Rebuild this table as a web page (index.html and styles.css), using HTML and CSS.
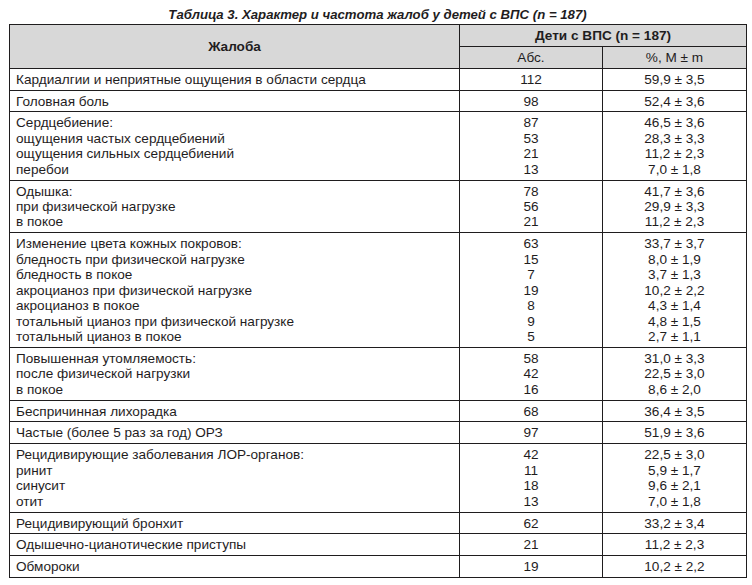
FILE: index.html
```html
<!DOCTYPE html>
<html lang="ru">
<head>
<meta charset="utf-8">
<link rel="stylesheet" href="styles.css">
</head>
<body>
<div class="page">
  <div class="caption">Таблица 3. Характер и частота жалоб у детей с ВПС (n = 187)</div>
  <table class="tbl">
    <colgroup>
      <col class="c1"><col class="c2"><col class="c3">
    </colgroup>
    <thead>
      <tr class="h1">
        <th rowspan="2" class="hmain">Жалоба</th>
        <th colspan="2">Дети с ВПС (n = 187)</th>
      </tr>
      <tr class="h2">
        <th class="sub">Абс.</th>
        <th class="sub">%, M ± m</th>
      </tr>
    </thead>
    <tbody>
      <tr><td>Кардиалгии и неприятные ощущения в области сердца</td><td>112</td><td>59,9 ± 3,5</td></tr>
      <tr><td>Головная боль</td><td>98</td><td>52,4 ± 3,6</td></tr>
      <tr><td>Сердцебиение:<br>ощущения частых сердцебиений<br>ощущения сильных сердцебиений<br>перебои</td><td>87<br>53<br>21<br>13</td><td>46,5 ± 3,6<br>28,3 ± 3,3<br>11,2 ± 2,3<br>7,0 ± 1,8</td></tr>
      <tr><td>Одышка:<br>при физической нагрузке<br>в покое</td><td>78<br>56<br>21</td><td>41,7 ± 3,6<br>29,9 ± 3,3<br>11,2 ± 2,3</td></tr>
      <tr><td>Изменение цвета кожных покровов:<br>бледность при физической нагрузке<br>бледность в покое<br>акроцианоз при физической нагрузке<br>акроцианоз в покое<br>тотальный цианоз при физической нагрузке<br>тотальный цианоз в покое</td><td>63<br>15<br>7<br>19<br>8<br>9<br>5</td><td>33,7 ± 3,7<br>8,0 ± 1,9<br>3,7 ± 1,3<br>10,2 ± 2,2<br>4,3 ± 1,4<br>4,8 ± 1,5<br>2,7 ± 1,1</td></tr>
      <tr><td>Повышенная утомляемость:<br>после физической нагрузки<br>в покое</td><td>58<br>42<br>16</td><td>31,0 ± 3,3<br>22,5 ± 3,0<br>8,6 ± 2,0</td></tr>
      <tr><td>Беспричинная лихорадка</td><td>68</td><td>36,4 ± 3,5</td></tr>
      <tr><td>Частые (более 5 раз за год) ОРЗ</td><td>97</td><td>51,9 ± 3,6</td></tr>
      <tr><td>Рецидивирующие заболевания ЛОР-органов:<br>ринит<br>синусит<br>отит</td><td>42<br>11<br>18<br>13</td><td>22,5 ± 3,0<br>5,9 ± 1,7<br>9,6 ± 2,1<br>7,0 ± 1,8</td></tr>
      <tr><td>Рецидивирующий бронхит</td><td>62</td><td>33,2 ± 3,4</td></tr>
      <tr><td>Одышечно-цианотические приступы</td><td>21</td><td>11,2 ± 2,3</td></tr>
      <tr><td>Обмороки</td><td>19</td><td>10,2 ± 2,2</td></tr>
    </tbody>
  </table>
</div>
</body>
</html>
```
FILE: styles.css
```css
html, body {
  margin: 0;
  padding: 0;
  background: #ffffff;
}
.page {
  padding: 7px 0 0 9px;
  width: 737px;
  font-family: "Liberation Sans", Arial, sans-serif;
  color: #1f1d1e;
}
.caption {
  font-weight: bold;
  font-style: italic;
  font-size: 13.2px;
  line-height: 15px;
  text-align: center;
  margin-bottom: 2px;
}
.tbl {
  border-collapse: collapse;
  width: 737px;
  table-layout: fixed;
  font-size: 13.6px;
  line-height: 15.45px;
}
.c1 { width: 450px; }
.c2 { width: 143px; }
.c3 { width: 144px; }
.tbl th, .tbl td {
  border: 1px solid #1f1d1e;
  vertical-align: top;
  padding: 3px 6px 2.4px 6px;
}
.tbl th {
  background: #d8d8d8;
  font-weight: bold;
  text-align: center;
  vertical-align: middle;
}
.tbl th.sub {
  font-weight: normal;
}
.tbl td:nth-child(2), .tbl td:nth-child(3) {
  text-align: center;
}
```
